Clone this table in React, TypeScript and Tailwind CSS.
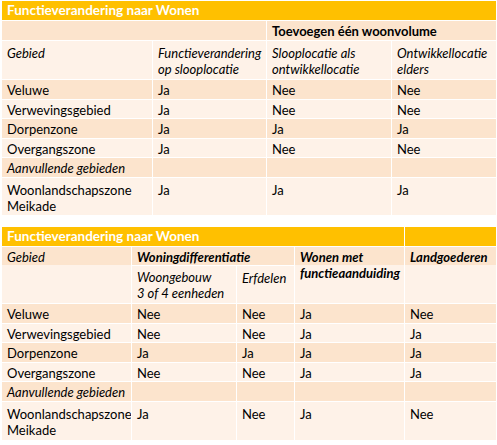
import React from "react";

const DARK = "bg-[#FCE4CD]";
const LIGHT = "bg-[#FEF2E8]";

type CellProps = {
  children?: React.ReactNode;
  className?: string;
};

function C({ children, className = "" }: CellProps) {
  return (
    <div className={`px-[5px] pt-[2px] leading-[16px] overflow-hidden whitespace-nowrap ${className}`}>
      {children}
    </div>
  );
}

function Title({ children, className = "" }: CellProps) {
  return (
    <div className={`bg-[#FFC000] text-white font-bold text-[13.5px] px-[5px] pt-[1px] leading-[17px] whitespace-nowrap ${className}`}>
      {children}
    </div>
  );
}

export default function App() {
  const font = { fontFamily: "Lato, 'Open Sans', sans-serif" };
  return (
    <div className="w-[497px] h-[445px] bg-white text-black text-[13px] pt-[1px] pl-[2px]" style={font}>
      {/* Table 1 */}
      <div className="grid grid-cols-[150px_113px_124px_104px] grid-rows-[19px_19px_38px_19px_18px_19px_18px_19px_37px] gap-[1px] bg-white w-[494px]">
        <Title className="col-span-4">Functieverandering naar Wonen</Title>

        <C className={`col-span-2 ${DARK}`}></C>
        <C className={`col-span-2 ${DARK} font-bold`}>Toevoegen één woonvolume</C>

        <C className={`${LIGHT} italic pt-[4px]`}>Gebied</C>
        <C className={`${LIGHT} italic pt-[4px]`}>Functieverandering<br />op slooplocatie</C>
        <C className={`${LIGHT} italic pt-[4px]`}>Slooplocatie als<br />ontwikkellocatie</C>
        <C className={`${LIGHT} italic pt-[4px]`}>Ontwikkellocatie<br />elders</C>

        <C className={DARK}>Veluwe</C>
        <C className={DARK}>Ja</C>
        <C className={DARK}>Nee</C>
        <C className={DARK}>Nee</C>

        <C className={LIGHT}>Verwevingsgebied</C>
        <C className={LIGHT}>Ja</C>
        <C className={LIGHT}>Nee</C>
        <C className={LIGHT}>Nee</C>

        <C className={DARK}>Dorpenzone</C>
        <C className={DARK}>Ja</C>
        <C className={DARK}>Ja</C>
        <C className={DARK}>Ja</C>

        <C className={LIGHT}>Overgangszone</C>
        <C className={LIGHT}>Ja</C>
        <C className={LIGHT}>Nee</C>
        <C className={LIGHT}>Nee</C>

        <C className={`${DARK} italic`}>Aanvullende gebieden</C>
        <C className={DARK}></C>
        <C className={DARK}></C>
        <C className={DARK}></C>

        <C className={`${LIGHT} pt-[4px]`}>Woonlandschapszone<br />Meikade</C>
        <C className={`${LIGHT} pt-[4px]`}>Ja</C>
        <C className={`${LIGHT} pt-[4px]`}>Ja</C>
        <C className={`${LIGHT} pt-[4px]`}>Ja</C>
      </div>

      {/* Table 2 */}
      <div className="mt-[12px] grid grid-cols-[129px_104px_57px_109px_91px] grid-rows-[19px_18px_37px_19px_18px_19px_18px_19px_38px] gap-[1px] bg-white w-[494px]">
        <Title className="col-span-4">Functieverandering naar Wonen</Title>
        <Title></Title>

        <C className="row-span-2 italic bg-[linear-gradient(to_bottom,#FCE4CD_18px,#FEF2E8_18px)]">Gebied</C>
        <C className={`col-span-2 ${DARK} italic font-bold`}>Woningdifferentiatie</C>
        <C className="row-span-2 italic font-bold bg-[linear-gradient(to_bottom,#FCE4CD_18px,#FEF2E8_18px)]">
          Wonen met<br />functieaanduiding
        </C>
        <C className="row-span-2 italic font-bold bg-[linear-gradient(to_bottom,#FCE4CD_18px,#FEF2E8_18px)]">
          Landgoederen
        </C>

        <C className={`${LIGHT} italic pt-[3px]`}>Woongebouw<br />3 of 4 eenheden</C>
        <C className={`${LIGHT} italic pt-[4px]`}>Erfdelen</C>

        <C className={DARK}>Veluwe</C>
        <C className={DARK}>Nee</C>
        <C className={DARK}>Nee</C>
        <C className={DARK}>Ja</C>
        <C className={DARK}>Nee</C>

        <C className={LIGHT}>Verwevingsgebied</C>
        <C className={LIGHT}>Nee</C>
        <C className={LIGHT}>Nee</C>
        <C className={LIGHT}>Ja</C>
        <C className={LIGHT}>Ja</C>

        <C className={DARK}>Dorpenzone</C>
        <C className={DARK}>Ja</C>
        <C className={DARK}>Ja</C>
        <C className={DARK}>Ja</C>
        <C className={DARK}>Ja</C>

        <C className={LIGHT}>Overgangszone</C>
        <C className={LIGHT}>Nee</C>
        <C className={LIGHT}>Nee</C>
        <C className={LIGHT}>Ja</C>
        <C className={LIGHT}>Ja</C>

        <C className={`${DARK} italic`}>Aanvullende gebieden</C>
        <C className={DARK}></C>
        <C className={DARK}></C>
        <C className={DARK}></C>
        <C className={DARK}></C>

        <C className={`${LIGHT} pt-[4px]`}>Woonlandschapszone<br />Meikade</C>
        <C className={`${LIGHT} pt-[4px]`}>Ja</C>
        <C className={`${LIGHT} pt-[4px]`}>Nee</C>
        <C className={`${LIGHT} pt-[4px]`}>Ja</C>
        <C className={`${LIGHT} pt-[4px]`}>Nee</C>
      </div>
    </div>
  );
}
